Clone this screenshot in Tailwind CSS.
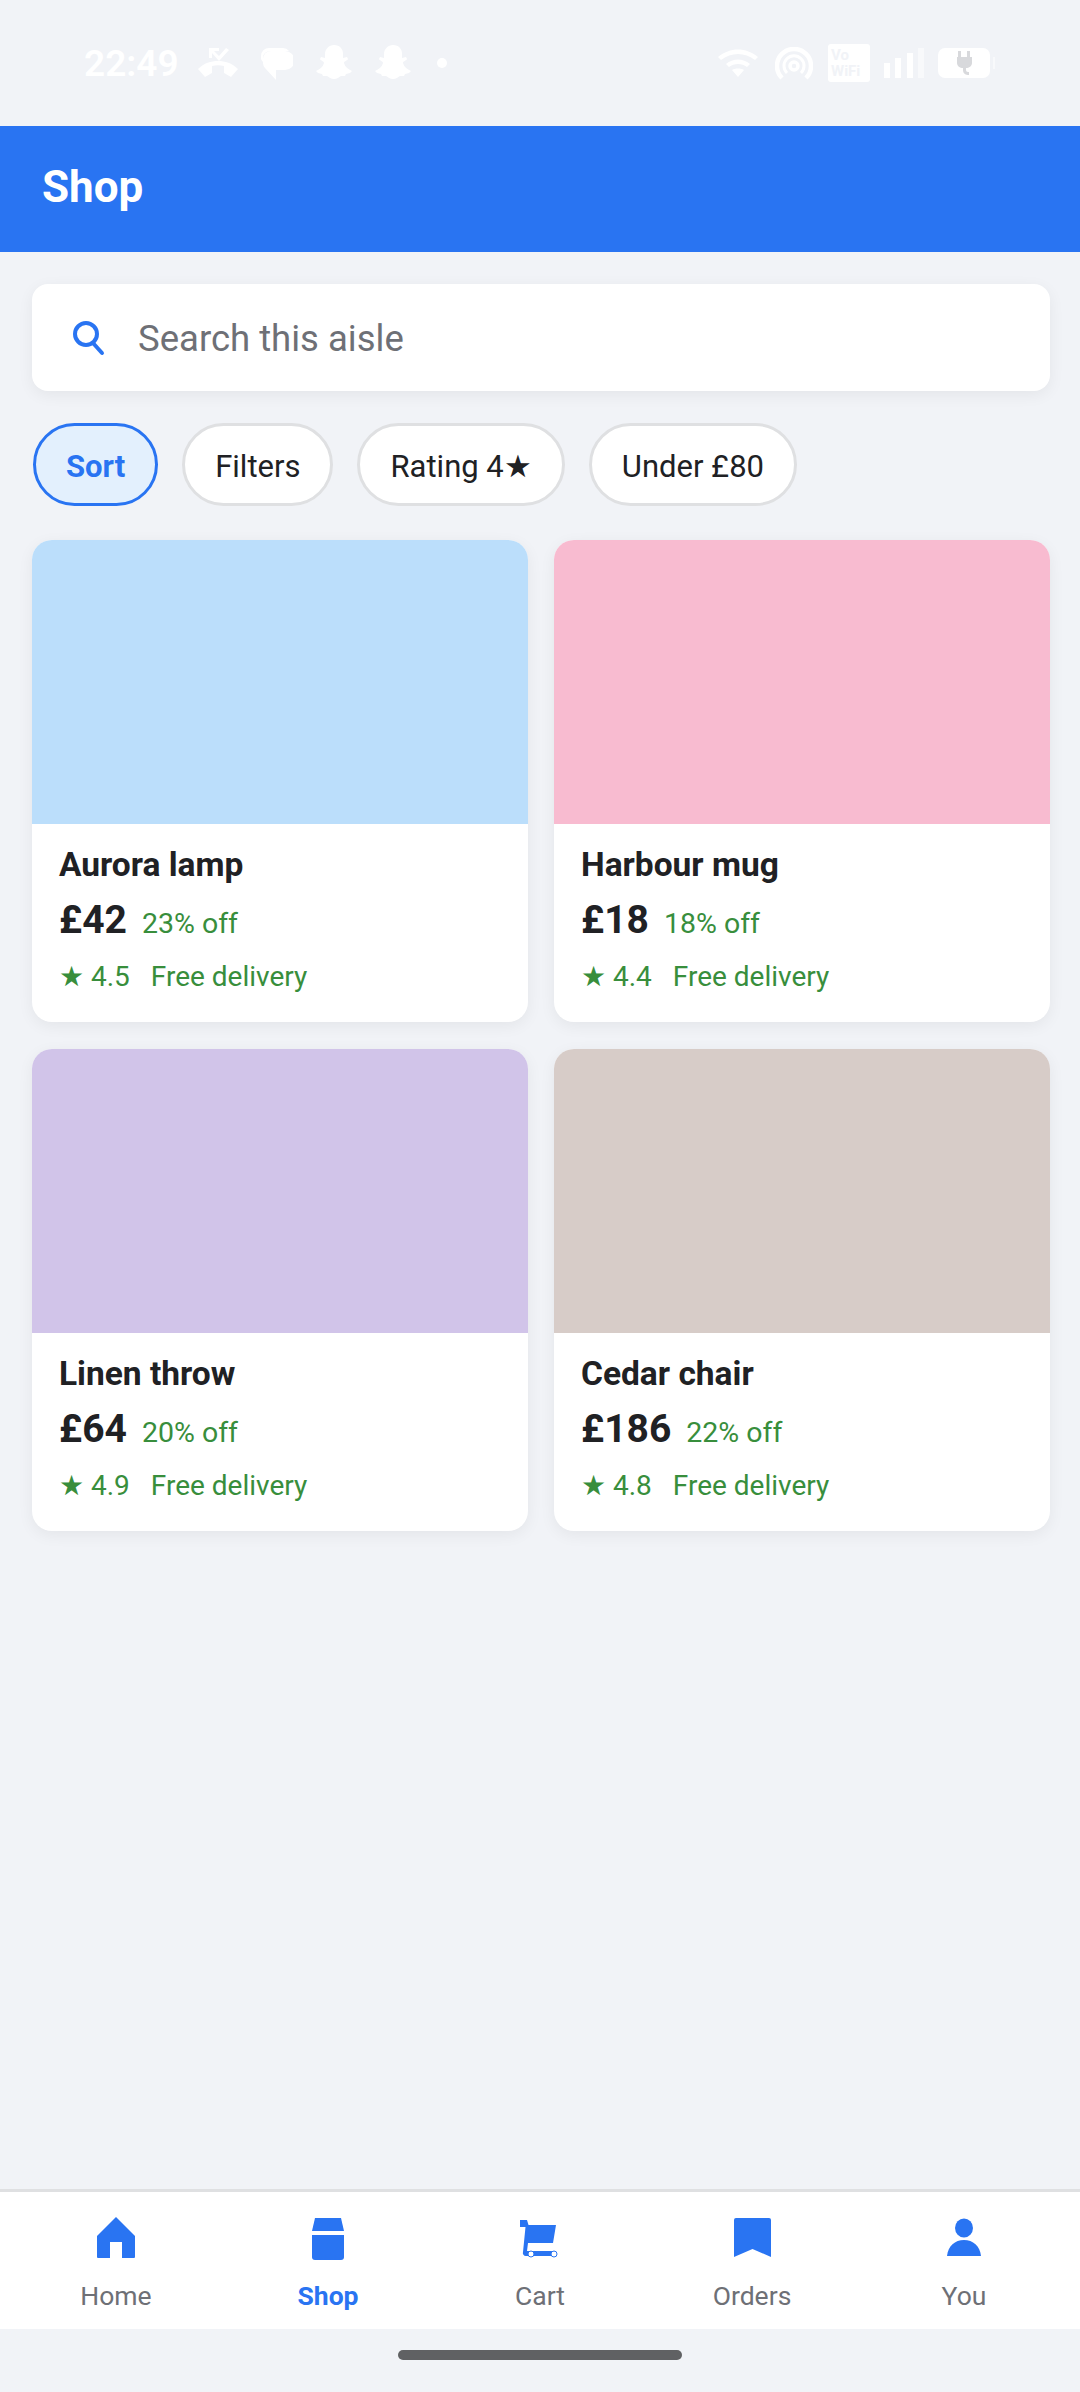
<!DOCTYPE html>
<html><head><meta charset="utf-8">
<script src="https://cdn.jsdelivr.net/npm/@tailwindcss/browser@4"></script>
</head>
<body class="m-0">
<div class="relative w-[1080px] h-[2392px] bg-[#f1f3f7] overflow-hidden flex flex-col font-['Roboto',sans-serif]">
  <!-- status bar -->
  <div class="h-[126px] shrink-0 flex items-center justify-between pl-[84px] pr-[90px] text-white">
    <div class="flex items-center">
      <span class="text-[37px] font-semibold leading-none w-[92px] whitespace-nowrap">22:49</span>
      <svg class="ml-[22px]" width="40" height="32" viewBox="0 0 40 32" fill="#fff"><path d="M0 22C6 16 13 14 20 14s14 2 20 8l-7 8-7-4v-7c-4-1-8-1-12 0v7l-7 4z"/><path d="M11 1h10v3h-5l5 5 7-8 3 2-10 11-7-8v5h-3z"/></svg>
      <svg class="ml-[23px]" width="32" height="33" viewBox="0 0 32 33" fill="#fff"><path d="M0 9a8 8 0 0 1 8-8h14a8 8 0 0 1 6 3H9a8 8 0 0 0-7 5v6a8 8 0 0 1-2-3z"/><path d="M10 4h14a7 7 0 0 1 0 19h-9v10L4 21a7 7 0 0 1-2-5v-4a8 8 0 0 1 8-8z"/></svg>
      <svg class="ml-[23px]" width="36" height="36" viewBox="0 0 36 36" fill="#fff"><path d="M18 0c6 0 9 4 9 9v4l4-1 1 2c-1 2-4 2-4 4 1 4 4 6 8 8l-2 2-4 1-1 2-4 0c-2 1-4 3-7 3s-5-2-7-3l-4 0-1-2-4-1-2-2c4-2 7-4 8-8 0-2-3-2-4-4l1-2 4 1V9c0-5 4-9 9-9z"/></svg>
      <svg class="ml-[23px]" width="36" height="36" viewBox="0 0 36 36" fill="#fff"><path d="M18 0c6 0 9 4 9 9v4l4-1 1 2c-1 2-4 2-4 4 1 4 4 6 8 8l-2 2-4 1-1 2-4 0c-2 1-4 3-7 3s-5-2-7-3l-4 0-1-2-4-1-2-2c4-2 7-4 8-8 0-2-3-2-4-4l1-2 4 1V9c0-5 4-9 9-9z"/></svg>
      <span class="ml-[26px] w-[10px] h-[10px] rounded-full bg-white"></span>
    </div>
    <div class="flex items-center">
      <svg width="40" height="28" viewBox="0 0 40 28" fill="#fff"><path d="M0 8C12-2 28-2 40 8l-3 3C27 3 13 3 3 11z"/><path d="M8 15c7-6 17-6 24 0l-3 3c-5-4-13-4-18 0z"/><path d="M14 21c3-2 9-2 12 0l-6 7z"/></svg>
      <svg class="ml-[17px]" width="38" height="33" viewBox="0 0 38 33" fill="none" stroke="#fff" stroke-width="4.5"><path d="M7 31A17 17 0 1 1 31 31"/><path d="M12 26A10 10 0 1 1 26 26" stroke-width="3"/><circle cx="19" cy="19" r="4" stroke-width="3.5"/></svg>
      <div class="ml-[15px] w-[42px] h-[38px] rounded-[3px] bg-white text-[#f1f3f7] text-[15px] font-bold leading-[16px] pl-[3px] pt-[3px] overflow-hidden">Vo<br>WiFi</div>
      <svg class="ml-[14px]" width="40" height="30" viewBox="0 0 40 30"><rect x="0" y="15" width="6" height="15" fill="#fff"/><rect x="11" y="10" width="6" height="20" fill="#fff"/><rect x="23" y="5" width="6" height="25" fill="#fff"/><rect x="34" y="0" width="6" height="30" fill="#fff" fill-opacity=".5"/></svg>
      <div class="ml-[14px] relative w-[52px] h-[30px] rounded-[7px] bg-white flex items-center justify-center">
        <svg width="18" height="24" viewBox="0 0 18 24" fill="#d8d9dc"><path d="M3 0h3v6h6V0h3v6h2v6c0 3-3 5-6 5v2c0 2 2 2 3 2v3c-3 0-6-1-6-5v-2c-3 0-6-2-6-5V6h1z"/></svg>
        <span class="absolute right-[-5px] top-[9px] w-[2px] h-[12px] bg-white/50"></span>
      </div>
    </div>
  </div>
  <!-- header -->
  <div class="h-[126px] shrink-0 bg-[#2974f2] flex items-center pl-[42px] pb-[5px]">
    <span class="text-[44px] font-bold text-white leading-none">Shop</span>
  </div>
  <!-- search -->
  <div class="mt-[32px] ml-[32px] mr-[30px] h-[107px] bg-white rounded-[16px] shadow-[0_4px_16px_rgba(0,0,0,0.06)] flex items-center pl-[38px]">
    <svg width="38" height="38" viewBox="0 0 38 38" fill="none" stroke="#2974f2" stroke-width="4"><circle cx="16" cy="15" r="11"/><path d="M23 24l9 10" stroke-linecap="round"/></svg>
    <span class="ml-[30px] pt-[3px] text-[36.5px] text-[#6e7076] leading-none">Search this aisle</span>
  </div>
  <!-- chips -->
  <div class="mt-[32px] mx-[33px] flex gap-[24px]">
    <div class="h-[83px] pt-[5px] px-[30px] rounded-[42px] border-[3px] border-[#2974f2] bg-[#e3f0fd] flex items-center text-[31px] font-bold text-[#2974f2]">Sort</div>
    <div class="h-[83px] pt-[5px] px-[30px] rounded-[42px] border-[3px] border-[#dfe0e2] bg-white flex items-center text-[31px] text-[#202124]">Filters</div>
    <div class="h-[83px] pt-[5px] px-[30px] rounded-[42px] border-[3px] border-[#dfe0e2] bg-white flex items-center text-[31px] text-[#202124]">Rating 4★</div>
    <div class="h-[83px] pt-[5px] px-[30px] rounded-[42px] border-[3px] border-[#dfe0e2] bg-white flex items-center text-[31px] text-[#202124]">Under £80</div>
  </div>
  <!-- grid -->
  <div class="mt-[34px] mx-[32px] grid grid-cols-[496px_496px] gap-x-[26px] gap-y-[27px]">
    <div class="h-[482px] bg-white rounded-[20px] shadow-[0_4px_16px_rgba(0,0,0,0.06)] overflow-hidden">
      <div class="h-[284px] bg-[#bbdefb]"></div>
      <div class="pl-[27px] pt-[22px]">
        <div class="text-[33.5px] font-bold text-[#202124] leading-[38px]">Aurora lamp</div>
        <div class="mt-[14px] flex items-baseline leading-[44px]"><span class="text-[39px] font-bold text-[#202124]">£42</span><span class="ml-[15px] text-[28.5px] text-[#388e3c]">23% off</span></div>
        <div class="mt-[14px] flex text-[28px] text-[#388e3c] leading-[34px]"><span>★ 4.5</span><span class="ml-[21px]">Free delivery</span></div>
      </div>
    </div>
    <div class="h-[482px] bg-white rounded-[20px] shadow-[0_4px_16px_rgba(0,0,0,0.06)] overflow-hidden">
      <div class="h-[284px] bg-[#f8bbd0]"></div>
      <div class="pl-[27px] pt-[22px]">
        <div class="text-[33.5px] font-bold text-[#202124] leading-[38px]">Harbour mug</div>
        <div class="mt-[14px] flex items-baseline leading-[44px]"><span class="text-[39px] font-bold text-[#202124]">£18</span><span class="ml-[15px] text-[28.5px] text-[#388e3c]">18% off</span></div>
        <div class="mt-[14px] flex text-[28px] text-[#388e3c] leading-[34px]"><span>★ 4.4</span><span class="ml-[21px]">Free delivery</span></div>
      </div>
    </div>
    <div class="h-[482px] bg-white rounded-[20px] shadow-[0_4px_16px_rgba(0,0,0,0.06)] overflow-hidden">
      <div class="h-[284px] bg-[#d1c4e9]"></div>
      <div class="pl-[27px] pt-[22px]">
        <div class="text-[33.5px] font-bold text-[#202124] leading-[38px]">Linen throw</div>
        <div class="mt-[14px] flex items-baseline leading-[44px]"><span class="text-[39px] font-bold text-[#202124]">£64</span><span class="ml-[15px] text-[28.5px] text-[#388e3c]">20% off</span></div>
        <div class="mt-[14px] flex text-[28px] text-[#388e3c] leading-[34px]"><span>★ 4.9</span><span class="ml-[21px]">Free delivery</span></div>
      </div>
    </div>
    <div class="h-[482px] bg-white rounded-[20px] shadow-[0_4px_16px_rgba(0,0,0,0.06)] overflow-hidden">
      <div class="h-[284px] bg-[#d7ccc8]"></div>
      <div class="pl-[27px] pt-[22px]">
        <div class="text-[33.5px] font-bold text-[#202124] leading-[38px]">Cedar chair</div>
        <div class="mt-[14px] flex items-baseline leading-[44px]"><span class="text-[39px] font-bold text-[#202124]">£186</span><span class="ml-[15px] text-[28.5px] text-[#388e3c]">22% off</span></div>
        <div class="mt-[14px] flex text-[28px] text-[#388e3c] leading-[34px]"><span>★ 4.8</span><span class="ml-[21px]">Free delivery</span></div>
      </div>
    </div>
  </div>
  <div class="flex-1"></div>
  <!-- bottom nav -->
  <div class="h-[140px] shrink-0 bg-white border-t-[3px] border-[#dfe0e2] grid grid-cols-5 px-[10px] text-[26.5px] text-[#6e7076]">
    <div class="flex flex-col items-center pt-[24px]">
      <svg width="44" height="44" viewBox="0 0 44 44" fill="#2974f2"><path d="M22 1L41 20V41a1 1 0 0 1-1 1H28V26H16V42H4a1 1 0 0 1-1-1V20z"/></svg>
      <span class="mt-[21px] leading-[30px]">Home</span>
    </div>
    <div class="flex flex-col items-center pt-[24px]">
      <svg width="44" height="44" viewBox="0 0 44 44" fill="#2974f2"><path d="M9 2h26l3 13H6z"/><path d="M6 19h32v22a3 3 0 0 1-3 3H9a3 3 0 0 1-3-3z"/></svg>
      <span class="mt-[21px] leading-[30px] font-bold text-[#2974f2]">Shop</span>
    </div>
    <div class="flex flex-col items-center pt-[24px]">
      <svg width="44" height="44" viewBox="0 0 44 44" fill="#2974f2"><path d="M2 4h7l1.5 5H38l-3 18H10l-1 8h29v5H8a3 3 0 0 1-3-4L7.500 11H2z"/><circle cx="13" cy="38" r="3" fill="#fff" stroke="#2974f2" stroke-width="1"/><circle cx="36" cy="38" r="3" fill="#fff" stroke="#2974f2" stroke-width="1"/></svg>
      <span class="mt-[21px] leading-[30px]">Cart</span>
    </div>
    <div class="flex flex-col items-center pt-[24px]">
      <svg width="44" height="44" viewBox="0 0 44 44" fill="#2974f2"><path d="M4 4a2 2 0 0 1 2-2h33a2 2 0 0 1 2 2v37l-18.500-8L4 41z"/></svg>
      <span class="mt-[21px] leading-[30px]">Orders</span>
    </div>
    <div class="flex flex-col items-center pt-[24px]">
      <svg width="44" height="44" viewBox="0 0 44 44" fill="#2974f2"><ellipse cx="22" cy="12" rx="9" ry="9.500"/><path d="M5 40C6 30 13 24 22 24s16 6 17 16z"/></svg>
      <span class="mt-[21px] leading-[30px]">You</span>
    </div>
  </div>
  <div class="h-[63px] shrink-0 flex justify-center pt-[21px]">
    <div class="w-[284px] h-[10px] rounded-[5px] bg-[#606163]"></div>
  </div>
</div>
</body></html>
